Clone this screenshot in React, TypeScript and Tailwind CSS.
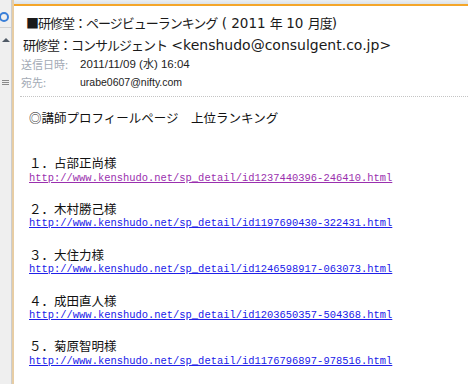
const jp = "font-['Noto_Sans_CJK_JP',sans-serif]";
const mono = "font-['Liberation_Mono','Noto_Sans_CJK_JP',monospace]";

const items = [
  { name: "１．占部正尚様", url: "http://www.kenshudo.net/sp_detail/id1237440396-246410.html", visited: true },
  { name: "２．木村勝己様", url: "http://www.kenshudo.net/sp_detail/id1197690430-322431.html", visited: false },
  { name: "３．大住力様", url: "http://www.kenshudo.net/sp_detail/id1246598917-063073.html", visited: false },
  { name: "４．成田直人様", url: "http://www.kenshudo.net/sp_detail/id1203650357-504368.html", visited: false },
  { name: "５．菊原智明様", url: "http://www.kenshudo.net/sp_detail/id1176796897-978516.html", visited: false },
];

const Cjk = ({ children }: { children: React.ReactNode }) => (
  <span className={`${jp} text-[13px] tracking-[-1px]`}>{children}</span>
);

export default function App() {
  return (
    <div className="flex w-[468px] h-[384px] overflow-hidden bg-white">
      {/* left reading-pane strip */}
      <div className="flex flex-col items-center w-[12px] h-full bg-[#efefef] border-r border-[#cdcdcd]">
        <div className="w-[10px] h-[10px] mt-[12px] -ml-[4px] rounded-full border-2 border-[#3a7fd8]" />
        <div className="w-full h-px mt-[5px] bg-[#d2d2d2]" />
        <div className="mt-[10px] w-0 h-0 border-l-[4px] border-r-[4px] border-b-[4px] border-l-transparent border-r-transparent border-b-[#505a66]" />
        <div className="flex flex-col gap-[1px] mt-[38px]">
          <div className="w-[7px] h-px bg-[#8a8a8a]" />
          <div className="w-[7px] h-px bg-[#8a8a8a]" />
          <div className="w-[7px] h-px bg-[#8a8a8a]" />
        </div>
      </div>
      <div className="w-[2px] h-full bg-[#e7cda4]" />

      <div className="flex flex-col flex-1 min-w-0">
        <div className="h-[5px] bg-gradient-to-b from-[#eceff3] to-[#dce2e8]" />
        <div className="h-[2px] bg-[#f4a62a]" />

        {/* header */}
        <div className="pl-[9px] pt-[6px] text-[#1a1a1a] font-['DejaVu_Sans','Noto_Sans_CJK_JP',sans-serif] text-[13.5px] whitespace-nowrap">
          <div className="h-[22px] leading-[22px] pl-[3px]">
            <Cjk>■研修堂：ページビューランキング</Cjk> ( 2011 <Cjk>年</Cjk> 10 <Cjk>月度</Cjk>)
          </div>
          <div className="h-[22px] leading-[22px]">
            <Cjk>研修堂：コンサルジェント</Cjk> <span className="text-[14px]">&lt;kenshudo@consulgent.co.jp&gt;</span>
          </div>
        </div>

        <div className="pl-[7px] whitespace-nowrap">
          <div className="flex items-center h-[18px]">
            <span className={`w-[59px] ${jp} text-[11px] text-[#a3aab5]`}>送信日時:</span>
            <span className="font-['Liberation_Sans','Noto_Sans_CJK_JP',sans-serif] text-[11.5px] text-[#222]">
              2011/11/09 (<span className={`${jp} text-[11px]`}>水</span>) 16:04
            </span>
          </div>
          <div className="flex items-center h-[18px]">
            <span className={`w-[59px] ${jp} text-[11px] text-[#a3aab5]`}>宛先:</span>
            <span className="font-['Liberation_Sans',sans-serif] text-[10.5px] text-[#222]">urabe0607@nifty.com</span>
          </div>
        </div>

        <div className="ml-[6px] mt-[4px] border-t border-dotted border-[#c4c4c4]" />

        {/* body */}
        <div className="pl-[15px] pt-[13px] text-[#111] whitespace-nowrap">
          <div className={`${jp} text-[12.5px] leading-[15.25px] h-[45.75px]`}>◎講師プロフィールページ　上位ランキング</div>
          {items.map((it) => (
            <div key={it.url} className="h-[45.75px]">
              <div className={`${jp} text-[12.5px] leading-[15.25px]`}>{it.name}</div>
              <a
                href="#"
                className={`block w-fit ${mono} text-[10.45px] leading-[15.25px] underline ${it.visited ? "text-[#9a2fae]" : "text-[#2020e8]"}`}
              >
                {it.url}
              </a>
            </div>
          ))}
        </div>
      </div>
    </div>
  );
}
